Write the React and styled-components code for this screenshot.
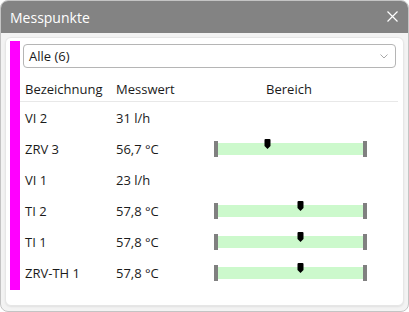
import React from 'react';
import styled, { createGlobalStyle } from 'styled-components';

const GlobalStyle = createGlobalStyle`
  html, body {
    margin: 0;
    padding: 0;
    background: #ffffff;
  }
  body {
    font-family: "Open Sans", "Noto Sans", sans-serif;
    color: #1b1b1b;
  }
`;

const Window = styled.div`
  box-sizing: border-box;
  width: 409px;
  height: 312px;
  border: 1px solid #c4c4c4;
  border-radius: 8px;
  background: #f3f3f3;
  overflow: hidden;
  display: flex;
  flex-direction: column;
`;

const TitleBar = styled.div`
  height: 32px;
  flex: none;
  background: #838383;
  color: #ffffff;
  display: flex;
  align-items: center;
  justify-content: space-between;
  padding: 0 10px 0 9px;
  font-size: 14px;
  font-weight: 500;
`;

const CloseButton = styled.svg`
  width: 11px;
  height: 11px;
  margin-top: -2px;
`;

const Body = styled.div`
  flex: 1;
  padding: 4px 4px 5px 4px;
  display: flex;
`;

const Card = styled.div`
  flex: 1;
  box-sizing: border-box;
  background: #ffffff;
  border: 1px solid #e6e6e6;
  border-radius: 6px;
  box-shadow: 0 1px 2px rgba(0, 0, 0, 0.08);
  padding: 3px 5px 15px 4px;
  display: flex;
  gap: 3px;
`;

const Marker = styled.div`
  width: 10px;
  flex: none;
  background: #ff00ff;
`;

const Content = styled.div`
  flex: 1;
  padding-top: 3px;
  display: flex;
  flex-direction: column;
`;

const Select = styled.div`
  box-sizing: border-box;
  height: 24px;
  width: 373px;
  border: 1px solid #b5b5b5;
  border-radius: 4px;
  display: flex;
  align-items: center;
  justify-content: space-between;
  padding: 0 7px 0 5px;
  font-size: 13px;
`;

const Chevron = styled.svg`
  width: 8px;
  height: 5px;
`;

const Table = styled.div`
  margin-top: 8px;
  margin-left: -3px;
  display: grid;
  grid-template-columns: 91px 93px 1fr;
  font-size: 13px;
`;

const HeadCell = styled.div`
  height: 25px;
  display: flex;
  align-items: center;
  padding-left: ${(p) => (p.$center ? 0 : '5px')};
  justify-content: ${(p) => (p.$center ? 'center' : 'flex-start')};
  border-bottom: 1px solid #e8e8e8;
  padding-right: ${(p) => (p.$center ? '24px' : 0)};
`;

const Cell = styled.div`
  height: 31px;
  display: flex;
  align-items: center;
  padding-left: 5px;
`;

const RangeCell = styled.div`
  height: 31px;
  display: flex;
  align-items: center;
  padding-left: 10px;
`;

const Range = styled.div`
  position: relative;
  width: 153px;
  height: 16px;
  display: flex;
  align-items: center;
`;

const Cap = styled.div`
  width: 4px;
  height: 16px;
  background: #808080;
  flex: none;
`;

const Track = styled.div`
  flex: 1;
  height: 12px;
  background: #ccf9cc;
`;

const Pointer = styled.svg`
  position: absolute;
  top: -2px;
  width: 7px;
  height: 10px;
  margin-left: -3.5px;
`;

const rows = [
  { name: 'VI 2', value: '31 l/h' },
  { name: 'ZRV 3', value: '56,7 °C', pos: 0.34 },
  { name: 'VI 1', value: '23 l/h' },
  { name: 'TI 2', value: '57,8 °C', pos: 0.57 },
  { name: 'TI 1', value: '57,8 °C', pos: 0.57 },
  { name: 'ZRV-TH 1', value: '57,8 °C', pos: 0.57 },
];

const RangeBar = ({ pos }) => (
  <Range>
    <Cap />
    <Track />
    <Cap />
    <Pointer viewBox="0 0 7 10" style={{ left: `${4 + pos * 145}px` }}>
      <path d="M0.5 1 Q0.5 0 1.5 0 H5.5 Q6.5 0 6.5 1 V7 L3.5 10 L0.5 7 Z" fill="#000" />
    </Pointer>
  </Range>
);

export default function App() {
  return (
    <>
      <GlobalStyle />
      <Window>
        <TitleBar>
          <span>Messpunkte</span>
          <CloseButton viewBox="0 0 11 11">
            <path d="M0.5 0.5 L10.5 10.5 M10.5 0.5 L0.5 10.5" stroke="#fff" strokeWidth="1.2" />
          </CloseButton>
        </TitleBar>
        <Body>
          <Card>
            <Marker />
            <Content>
              <Select>
                <span>Alle (6)</span>
                <Chevron viewBox="0 0 8 5">
                  <path d="M0.5 0.5 L4 4 L7.5 0.5" stroke="#a8a8a8" strokeWidth="1" fill="none" />
                </Chevron>
              </Select>
              <Table>
                <HeadCell>Bezeichnung</HeadCell>
                <HeadCell>Messwert</HeadCell>
                <HeadCell $center>Bereich</HeadCell>
                {rows.map((r) => (
                  <React.Fragment key={r.name}>
                    <Cell>{r.name}</Cell>
                    <Cell>{r.value}</Cell>
                    <RangeCell>{r.pos !== undefined && <RangeBar pos={r.pos} />}</RangeCell>
                  </React.Fragment>
                ))}
              </Table>
            </Content>
          </Card>
        </Body>
      </Window>
    </>
  );
}
